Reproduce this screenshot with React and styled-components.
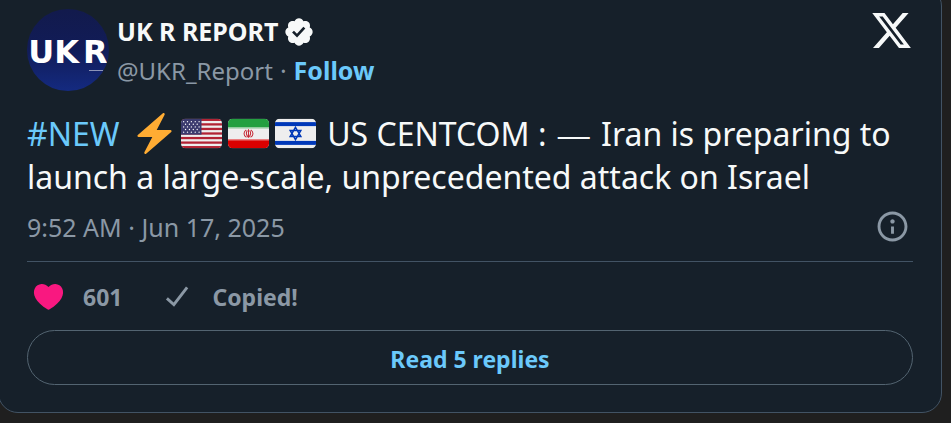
import React from 'react'
import styled, { createGlobalStyle } from 'styled-components'

const GlobalStyle = createGlobalStyle`
  * {
    box-sizing: border-box;
  }
  body {
    margin: 0;
    background: #1f1f1f;
    font-family: 'Segoe UI', 'Noto Sans', 'Open Sans', sans-serif;
  }
`

const Page = styled.main`
  display: flow-root;
  overflow: hidden;
  padding-right: 9px;
`
const Card = styled.article`
  margin: -14px 0 10px -2px;
  padding: 22px 28px 27px;
  border: 1px solid #425364;
  border-radius: 20px;
  background: #16202a;
  color: #f7f9f9;
`
const Header = styled.header`
  display: flex;
  align-items: flex-start;
`
const Avatar = styled.a`
  display: flex;
  align-items: center;
  justify-content: center;
  flex: none;
  position: relative;
  width: 82px;
  height: 82px;
  margin-right: 8px;
  padding-top: 4px;
  border-radius: 50%;
  overflow: hidden;
  background: linear-gradient(#121a4c, #111c58 50%, #142a80);
  color: #fff;
  font: bold 32px 'DejaVu Sans', sans-serif;
  text-decoration: none;
  white-space: nowrap;
`
const AvatarLetters = styled.span`
  display: flex;
  gap: 4px;
`
const AvatarMark = styled.span`
  position: absolute;
  right: 6px;
  bottom: 20px;
  width: 14px;
  height: 1px;
  background: #8d94b8;
`
const Author = styled.div`
  flex: 1;
  padding-top: 3px;
  font-size: 25px;
  line-height: 39px;
`
const NameRow = styled.div`
  display: flex;
  align-items: center;
  gap: 5px;
`
const Name = styled.a`
  color: #f7f9f9;
  font-weight: 700;
  text-decoration: none;
`
const HandleRow = styled.div`
  display: flex;
  gap: 7px;
  color: #8b98a5;
`
const Handle = styled.a`
  color: #8b98a5;
  font-size: 24px;
  text-decoration: none;
`
const Follow = styled.a`
  color: #6bc9fb;
  font-weight: 700;
  text-decoration: none;
`
const IconLink = styled.a`
  display: flex;
  color: ${props => props.$color};
`
const Icon = styled.svg`
  display: block;
  flex: none;
  width: ${props => props.$size}px;
  height: ${props => props.$size}px;
  fill: currentColor;
`
const Message = styled.p`
  margin: 21px 0 0;
  font-size: 32px;
  line-height: 43px;
`
const Hashtag = styled.a`
  margin-right: 3px;
  color: #6bc9fb;
  text-decoration: none;
`
const Dash = styled.span`
  margin: 0 3px;
  font-family: 'Liberation Sans', sans-serif;
  line-height: 1;
`
const Emoji = styled.svg`
  width: 41px;
  height: 41px;
  margin: 0 3px;
  vertical-align: -8px;
`
const Meta = styled.div`
  display: flex;
  align-items: center;
  justify-content: space-between;
  height: 64px;
  padding: 0 3px 6px 0;
  border-bottom: 1px solid #425364;
  color: #8b98a5;
  font-size: 25px;
`
const Actions = styled.div`
  display: flex;
  gap: 38px;
  padding: 17px 4px 16px;
`
const Action = styled.button`
  display: flex;
  align-items: center;
  gap: 17px;
  height: 35px;
  padding: 0;
  border: 0;
  background: none;
  color: #8b98a5;
  font: inherit;
  font-size: 23px;
  font-weight: 700;
  cursor: pointer;
`
const Heart = styled(Icon)`
  color: #f91880;
`
const Replies = styled.button`
  display: block;
  width: 100%;
  height: 55px;
  padding: 2px 0 0;
  border: 1px solid #536471;
  border-radius: 28px;
  background: none;
  color: #6bc9fb;
  font: inherit;
  font-size: 23px;
  font-weight: 700;
  cursor: pointer;
`

const paths = {
  x: 'M18.244 2.25h3.308l-7.227 8.26 8.502 11.24H16.17l-5.214-6.817L4.99 21.75H1.68l7.73-8.835L1.254 2.25H8.08l4.713 6.231zm-1.161 17.52h1.833L7.084 4.126H5.117z',
  verified: 'M22.25 12c0-1.43-.88-2.67-2.19-3.34.46-1.39.2-2.9-.81-3.91s-2.52-1.27-3.91-.81c-.66-1.31-1.91-2.19-3.34-2.19s-2.67.88-3.33 2.19c-1.4-.46-2.91-.2-3.92.81s-1.26 2.52-.8 3.91c-1.31.67-2.2 1.91-2.2 3.34s.89 2.67 2.2 3.34c-.46 1.39-.21 2.9.8 3.91s2.52 1.26 3.91.81c.67 1.31 1.91 2.19 3.34 2.19s2.68-.88 3.34-2.19c1.39.45 2.9.2 3.91-.81s1.27-2.52.81-3.91c1.31-.67 2.19-1.91 2.19-3.34zm-11.71 4.2L6.8 12.46l1.41-1.42 2.26 2.26 4.8-5.23 1.47 1.36-6.2 6.77z',
  info: 'M13.5 8.5c0 .83-.67 1.5-1.5 1.5s-1.5-.67-1.5-1.5S11.17 7 12 7s1.5.67 1.5 1.5zM13 17v-5h-2v5h2zm-1 5.25c5.66 0 10.25-4.59 10.25-10.25S17.66 1.75 12 1.75 1.75 6.34 1.75 12 6.34 22.25 12 22.25zM20.25 12c0 4.56-3.69 8.25-8.25 8.25S3.75 16.56 3.75 12 7.44 3.75 12 3.75s8.25 3.69 8.25 8.25z',
  heart: 'M20.884 13.19c-1.351 2.48-4.001 5.12-8.379 7.67l-.503.3-.504-.3c-4.379-2.55-7.029-5.19-8.382-7.67-1.36-2.5-1.41-4.86-.514-6.67.887-1.79 2.647-2.91 4.601-3.01 1.651-.09 3.368.56 4.798 2.01 1.429-1.45 3.146-2.1 4.796-2.01 1.954.1 3.714 1.22 4.601 3.01.896 1.81.846 4.17-.514 6.67z',
  check: 'M9.64 18.952l-5.55-4.861 1.317-1.504 3.951 3.459 8.459-10.948L19.4 6.32 9.64 18.952z'
}

const BOLT = 'M32.938 15.651C32.792 15.26 32.418 15 32 15H19.925L26.89 1.458c.219-.426.106-.947-.271-1.243C26.437.071 26.218 0 26 0c-.233 0-.466.082-.653.243L18 6.588 3.347 19.243c-.316.273-.43.714-.284 1.105S3.582 21 4 21h12.075L9.11 34.542c-.219.426-.106.947.271 1.243.182.144.401.215.619.215.233 0 .466-.082.653-.243L18 29.412l14.653-12.655c.317-.273.43-.714.285-1.106z'

// every flag is clipped to the same rounded 36x26 shape
function Flag({ id, label, children }) {
  return (
    <Emoji viewBox='0 0 36 36' role='img' aria-label={label}>
      <clipPath id={id}><rect y='5' width='36' height='26' rx='4' /></clipPath>
      <g clipPath={`url(#${id})`}>
        <rect y='5' width='36' height='26' fill='#eee' />
        {children}
      </g>
    </Emoji>
  )
}

function UsFlag() {
  const stars = []
  for (let row = 0; row < 5; row++) {
    const count = row % 2 ? 4 : 5
    for (let i = 0; i < count; i++) {
      stars.push(<circle key={`${row}-${i}`} cx={(row % 2 ? 4 : 2.3) + i * 3.4} cy={7.6 + row * 2.3} r='.6' fill='#fff' />)
    }
  }
  return (
    <Flag id='us' label='Flag of United States'>
      {[0, 2, 4, 6, 8, 10, 12].map(i => <rect key={i} y={5 + i * 2} width='36' height='2' fill='#b22334' />)}
      <rect y='5' width='18' height='14' fill='#3c3b6e' />
      {stars}
    </Flag>
  )
}

function IranFlag() {
  return (
    <Flag id='ir' label='Flag of Iran'>
      <rect y='5' width='36' height='7.5' fill='#239f40' />
      <rect y='12.5' width='36' height='1.1' fill='#86c794' />
      <rect y='23' width='36' height='1' fill='#e96667' />
      <rect y='24' width='36' height='7' fill='#da0000' />
      <g fill='none' stroke='#c62a35' strokeWidth='.9'>
        <path d='M18 14.2v7.6M16 14.8c-2.6 1.8-2.6 5 .2 6.5M20 14.8c2.6 1.8 2.6 5-.2 6.5M17 15.4c-1.3 1.8-1.1 4 .9 6M19 15.4c1.3 1.8 1.1 4-.9 6' />
      </g>
    </Flag>
  )
}

function IsraelFlag() {
  return (
    <Flag id='il' label='Flag of Israel'>
      <rect y='8' width='36' height='3.5' fill='#0038b8' />
      <rect y='24.5' width='36' height='3.5' fill='#0038b8' />
      <path d='M18 12.6l4.7 8.1h-9.4zM18 23.4l4.7-8.1h-9.4z' fill='none' stroke='#0038b8' strokeWidth='1.3' />
    </Flag>
  )
}

function Glyph({ name, size }) {
  return (
    <Icon viewBox='0 0 24 24' $size={size} aria-hidden='true'><path d={paths[name]} /></Icon>
  )
}

function App() {
  return (
    <Page>
      <GlobalStyle />
      <Card>
        <Header>
          <Avatar href='#profile'>
            <AvatarLetters><span>UK</span><span>R</span></AvatarLetters>
            <AvatarMark />
          </Avatar>
          <Author>
            <NameRow>
              <Name href='#profile'>UK R REPORT</Name>
              <Glyph name='verified' size={32} />
            </NameRow>
            <HandleRow>
              <Handle href='#profile'>@UKR_Report</Handle>
              <span>·</span>
              <Follow href='#follow'>Follow</Follow>
            </HandleRow>
          </Author>
          <IconLink href='#post' $color='#f7f9f9' aria-label='View on X'>
            <Glyph name='x' size={43} />
          </IconLink>
        </Header>
        <Message>
          <Hashtag href='#new'>#NEW</Hashtag>{' '}
          <Emoji viewBox='0 0 36 36' role='img' aria-label='High voltage'><path fill='#ffac33' d={BOLT} /></Emoji>
          <UsFlag />
          <IranFlag />
          <IsraelFlag />
          {' '}US CENTCOM : <Dash>—</Dash> Iran is preparing to launch a large-scale, unprecedented attack on Israel
        </Message>
        <Meta>
          <time dateTime='2025-06-17T09:52'>9:52 AM · Jun 17, 2025</time>
          <IconLink href='#info' $color='#8b98a5' aria-label='Ads info and privacy'>
            <Glyph name='info' size={35} />
          </IconLink>
        </Meta>
        <Actions>
          <Action type='button'>
            <Heart viewBox='0 0 24 24' $size={35} aria-hidden='true'><path d={paths.heart} /></Heart>
            601
          </Action>
          <Action type='button'>
            <Glyph name='check' size={35} />
            Copied!
          </Action>
        </Actions>
        <Replies type='button'>Read 5 replies</Replies>
      </Card>
    </Page>
  )
}

export default App
